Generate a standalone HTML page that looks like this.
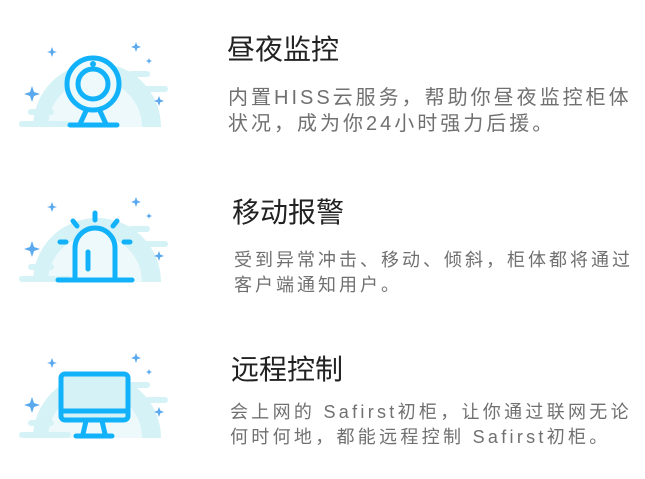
<!DOCTYPE html><html><head><meta charset="utf-8"><style>
body{margin:0;width:645px;height:479px;background:#fff;position:relative;overflow:hidden;font-family:"Liberation Sans","Noto Sans CJK SC",sans-serif}
.t{position:absolute;font-size:28px;color:#222;white-space:nowrap;line-height:1}
.d{position:absolute;font-size:19px;color:#707070;white-space:nowrap;line-height:1}
svg{position:absolute;left:0;top:0}
</style></head><body>
<svg width="200" height="479" viewBox="0 0 200 479">
<defs>
<g id="bg">
<path d="M33 127 A64 64 0 0 1 161 127 Z" fill="#d5f2f6"/>
<path d="M48 127 A47 47 0 0 1 142 127 Z" fill="#eef9fc"/>
<rect x="128" y="71" width="22" height="6" rx="3" fill="#d5f2f6"/>
<rect x="128" y="86" width="40" height="6" rx="3" fill="#d5f2f6"/>
<rect x="28" y="109" width="26" height="6" rx="3" fill="#d5f2f6"/>
<rect x="19" y="121" width="52" height="6" rx="3" fill="#d5f2f6"/>
<g fill="#5aa9ee">
<path d="M32 86 L34 92 L40 94 L34 96 L32 102 L30 96 L24 94 L30 92Z"/>
<path d="M52 47 L53.5 51 L57 52 L53.5 53 L52 57 L50.5 53 L47 52 L50.5 51Z"/>
<path d="M136 42 L137.3 45.5 L141 47 L137.3 48.3 L136 52 L134.7 48.3 L131 47 L134.7 45.5Z"/>
<path d="M149 58 L149.8 60 L152 61 L149.8 62 L149 64 L148.2 62 L146 61 L148.2 60Z"/>
<path d="M159 96 L160.3 99.5 L164 101 L160.3 102.3 L159 106 L157.7 102.3 L154 101 L157.7 99.5Z"/>
</g>
</g>
</defs>
<use href="#bg"/>
<g stroke="#12b2fb" stroke-width="5" fill="none" stroke-linecap="round">
<circle cx="93" cy="84" r="26" fill="#eef9fc"/>
<circle cx="93" cy="84" r="15"/>
<path d="M86 111 L80 124 M100 111 L106 124 M70 125 L117 125"/>
</g>
<circle cx="93" cy="64" r="3" fill="#12b2fb"/>
<use href="#bg" transform="translate(0,155)"/>
<g stroke="#12b2fb" stroke-width="5" fill="none" stroke-linecap="round">
<path d="M75 279 L75 248 A20 20 0 0 1 115 248 L115 279" fill="#eef9fc"/>
<path d="M58 280 L132 280 M88 252 L88 269 M95 213 L95 220 M73 221 L77 226 M117 221 L113 226 M60 242 L66 242 M124 242 L130 242"/>
</g>
<use href="#bg" transform="translate(0,311)"/>
<g stroke="#12b2fb" stroke-width="5" fill="none" stroke-linecap="round" stroke-linejoin="round">
<rect x="61" y="374" width="67" height="46" rx="4" fill="#d5f2f6"/>
<path d="M62 411 L127 411 M86 421 L83 434 M102 421 L105 434 M76 436 L112 436"/>
</g>
</svg>
<div class="t" style="left:227px;top:36px">昼夜监控</div>
<div class="d" style="left:228px;top:88px;font-size:20px;letter-spacing:3px">内置HISS云服务，帮助你昼夜监控柜体</div>
<div class="d" style="left:228px;top:114px;font-size:20px;letter-spacing:3px">状况，成为你24小时强力后援。</div>
<div class="t" style="left:232px;top:199px">移动报警</div>
<div class="d" style="left:234px;top:251px;font-size:18px;letter-spacing:3px">受到异常冲击、移动、倾斜，柜体都将通过</div>
<div class="d" style="left:234px;top:276px;font-size:18px;letter-spacing:3px">客户端通知用户。</div>
<div class="t" style="left:231px;top:356px">远程控制</div>
<div class="d" style="left:230px;top:403px;font-size:18px;letter-spacing:3.3px">会上网的 Safirst初柜，让你通过联网无论</div>
<div class="d" style="left:230px;top:428px;font-size:18px;letter-spacing:3.3px">何时何地，都能远程控制 Safirst初柜。</div>
</body></html>
